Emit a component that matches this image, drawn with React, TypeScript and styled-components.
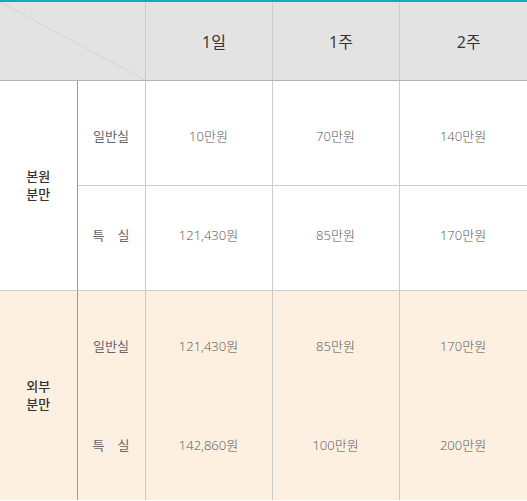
import React from "react";
import styled, { createGlobalStyle } from "styled-components";

const GlobalStyle = createGlobalStyle`
  body {
    margin: 0;
    background: #ffffff;
    font-family: "Open Sans", "Noto Sans CJK KR", sans-serif;
  }
`;

const PriceTable = styled.table`
  width: 527px;
  table-layout: fixed;
  border-collapse: collapse;
  border-top: 2px solid #17a9b8;
`;

const HeadRow = styled.tr`
  height: 79px;
  background: #e3e3e3;
`;

const CornerCell = styled.th`
  padding: 0;
  border-bottom: 1px solid #b4b4b4;
  border-right: 1px solid #cccccc;
  background: linear-gradient(
    to top right,
    transparent calc(50% - 0.6px),
    #cdcdcd 50%,
    transparent calc(50% + 0.6px)
  );
`;

const HeadCell = styled.th`
  padding: 0 0 0 11px;
  font-size: 16px;
  font-weight: 400;
  color: #333333;
  border-bottom: 1px solid #b4b4b4;
  border-left: 1px solid #cccccc;
  border-right: 1px solid #cccccc;
  &:last-child {
    border-right: none;
  }
`;

const BodyRow = styled.tr<{ $tint?: boolean }>`
  height: 105px;
  background: ${({ $tint }) => ($tint ? "#fdf0e1" : "#ffffff")};
`;

const GroupCell = styled.td<{ $open?: boolean }>`
  padding: 0;
  text-align: center;
  font-size: 13px;
  font-weight: 500;
  line-height: 18px;
  color: #333333;
  border-right: 1px solid #9a9a9a;
  border-bottom: ${({ $open }) => ($open ? "none" : "1px solid #cccccc")};
`;

// first row of a group sits a little low, the last a little high
const RoomCell = styled.td<{ $open?: boolean; $first?: boolean }>`
  padding: ${({ $first }) => ($first ? "6px 0 0" : "0 0 6px")};
  text-align: center;
  font-size: 13px;
  color: #666666;
  border-right: 1px solid #cccccc;
  border-bottom: ${({ $open }) => ($open ? "none" : "1px solid #cccccc")};
`;

const PriceCell = styled.td<{ $open?: boolean; $first?: boolean }>`
  padding: ${({ $first }) => ($first ? "6px 0 0" : "0 0 6px")};
  text-align: center;
  font-size: 13px;
  font-weight: 300;
  color: #555555;
  border-right: 1px solid #cccccc;
  border-bottom: ${({ $open }) => ($open ? "none" : "1px solid #cccccc")};
`;

type Group = {
  name: [string, string];
  tint?: boolean;
  open?: boolean;
  rows: { room: string; prices: string[] }[];
};

const groups: Group[] = [
  {
    name: ["본원", "분만"],
    rows: [
      { room: "일반실", prices: ["10만원", "70만원", "140만원"] },
      { room: "특\u3000실", prices: ["121,430원", "85만원", "170만원"] },
    ],
  },
  {
    name: ["외부", "분만"],
    tint: true,
    open: true,
    rows: [
      { room: "일반실", prices: ["121,430원", "85만원", "170만원"] },
      { room: "특\u3000실", prices: ["142,860원", "100만원", "200만원"] },
    ],
  },
];

export default function App() {
  return (
    <>
      <GlobalStyle />
      <PriceTable>
        <colgroup>
          <col style={{ width: 77 }} />
          <col style={{ width: 68 }} />
          <col style={{ width: 127 }} />
          <col style={{ width: 127 }} />
          <col style={{ width: 128 }} />
        </colgroup>
        <thead>
          <HeadRow>
            <CornerCell colSpan={2} />
            <HeadCell>1일</HeadCell>
            <HeadCell>1주</HeadCell>
            <HeadCell>2주</HeadCell>
          </HeadRow>
        </thead>
        <tbody>
          {groups.map((group) =>
            group.rows.map((row, i) => (
              <BodyRow key={group.name.join() + i} $tint={group.tint}>
                {i === 0 && (
                  <GroupCell rowSpan={group.rows.length} $open={group.open}>
                    {group.name[0]}
                    <br />
                    {group.name[1]}
                  </GroupCell>
                )}
                <RoomCell $open={group.open} $first={i === 0}>
                  {row.room}
                </RoomCell>
                {row.prices.map((price, j) => (
                  <PriceCell key={j} $open={group.open} $first={i === 0}>
                    {price}
                  </PriceCell>
                ))}
              </BodyRow>
            ))
          )}
        </tbody>
      </PriceTable>
    </>
  );
}
